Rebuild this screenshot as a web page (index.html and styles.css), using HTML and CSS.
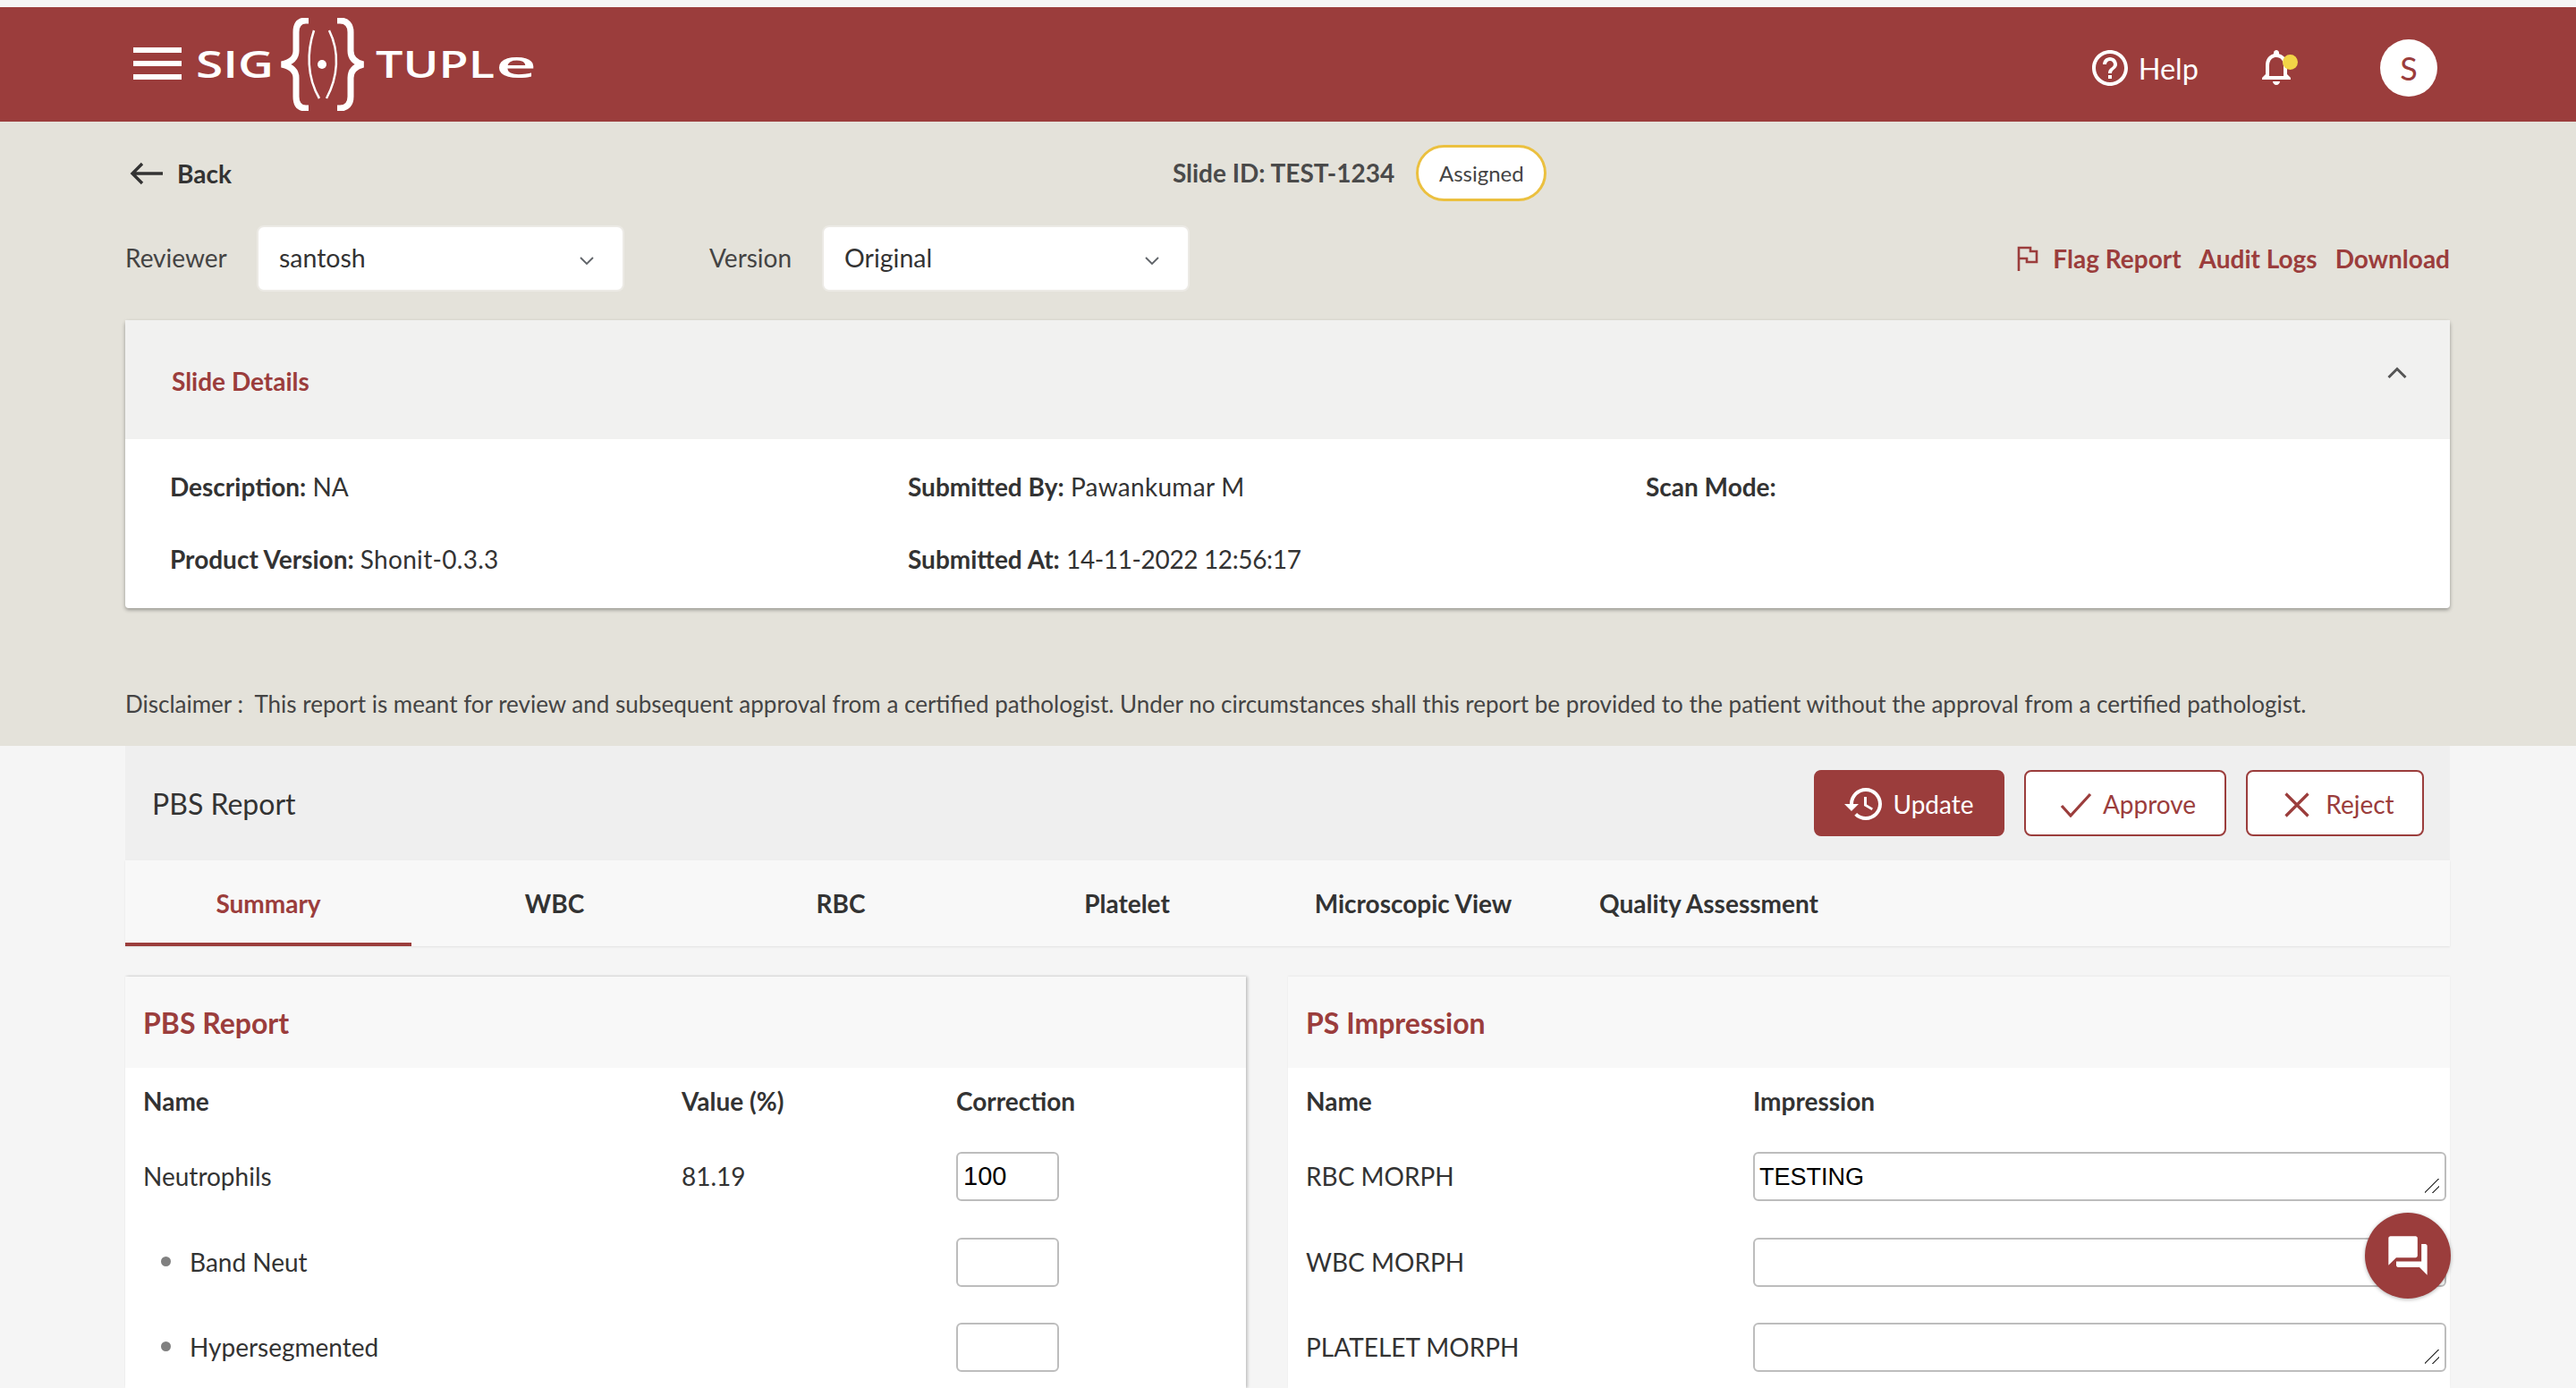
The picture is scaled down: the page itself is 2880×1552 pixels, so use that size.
FILE: index.html
```html
<!DOCTYPE html>
<html lang="en">
<head>
<meta charset="utf-8">
<title>PBS Report</title>
<link rel="stylesheet" href="styles.css">
</head>
<body>
<div class="strip"></div>
<header class="topbar">
  <div class="burger"><span></span><span></span><span></span></div>
  <svg class="logo" width="377" height="104" viewBox="0 0 377 104">
    <text class="logo-text" x="-1" y="67" textLength="87" lengthAdjust="spacingAndGlyphs">SIG</text>
    <g class="logo-lines">
      <path d="M125 3h-3c-8 0-11 5-11 13v21c0 9-7 13-16 15 9 2 16 6 16 15v21c0 8 3 13 11 13h3"/>
      <path d="M157 3h3c8 0 12 5 12 13v21c0 9 6 13 14 15-8 2-14 6-14 15v21c0 8-4 13-12 13h-3"/>
      <path class="thin" d="M131 14c-8 24-8 52 6 76"/>
      <path class="thin" d="M148 14c12 24 10 52-3 76"/>
    </g>
    <circle cx="140" cy="52" r="5" fill="#fff"/>
    <text class="logo-text" x="200" y="67" textLength="133" lengthAdjust="spacingAndGlyphs">TUPL</text>
    <text class="logo-text" x="334" y="67" textLength="46" lengthAdjust="spacingAndGlyphs" font-size="55">e</text>
  </svg>
  <div class="top-right">
    <div class="help">
      <svg width="40" height="40" viewBox="2 2 20 20"><path fill="#fff" d="M11 18h2v-2h-2v2zm1-16C6.48 2 2 6.48 2 12s4.48 10 10 10 10-4.48 10-10S17.52 2 12 2zm0 18c-4.41 0-8-3.59-8-8s3.59-8 8-8 8 3.59 8 8-3.59 8-8 8zm0-14c-2.21 0-4 1.79-4 4h2c0-1.1.9-2 2-2s2 .9 2 2c0 2-3 1.75-3 5h2c0-2.25 3-2.5 3-5 0-2.21-1.79-4-4-4z"/></svg>
      <span>Help</span>
    </div>
    <div class="bell">
      <svg width="32" height="44" viewBox="4 2 16 22"><path fill="#fff" d="M12 22c1.1 0 2-.9 2-2h-4c0 1.1.9 2 2 2zm6-6v-5c0-3.07-1.63-5.64-4.5-6.32V4c0-.83-.67-1.5-1.5-1.5s-1.5.67-1.5 1.5v.68C7.64 5.36 6 7.92 6 11v5l-2 2v1h16v-1l-2-2zm-2 1H8v-6c0-2.48 1.51-4.5 4-4.5s4 2.02 4 4.5v6z"/></svg>
      <i class="dot"></i>
    </div>
    <div class="avatar">S</div>
  </div>
</header>

<section class="beige">
  <div class="row-back">
    <div class="back">
      <svg width="38" height="26" viewBox="0 0 38 26"><path d="M37 13H3M14 2 3 13l11 11" fill="none" stroke="#333" stroke-width="3.4"/></svg>
      <span>Back</span>
    </div>
    <div class="slide-id">
      <span>Slide ID: TEST-1234</span>
      <span class="pill">Assigned</span>
    </div>
  </div>
  <div class="row-filters">
    <span class="f-label">Reviewer</span>
    <div class="select"><span>santosh</span><svg width="16" height="10" viewBox="0 0 16 10"><path d="M1 1l7 7 7-7" fill="none" stroke="#5f6368" stroke-width="1.8"/></svg></div>
    <span class="f-label second">Version</span>
    <div class="select"><span>Original</span><svg width="16" height="10" viewBox="0 0 16 10"><path d="M1 1l7 7 7-7" fill="none" stroke="#5f6368" stroke-width="1.8"/></svg></div>
    <div class="links">
      <svg width="24" height="28" viewBox="0 0 24 28"><path d="M2 28V2h13v4h7v12H11v-4H2" fill="none" stroke="#9b3d3c" stroke-width="2.6"/></svg>
      <a class="flag">Flag Report</a>
      <a>Audit Logs</a>
      <a>Download</a>
    </div>
  </div>
  <div class="details">
    <div class="details-head">
      <span>Slide Details</span>
      <svg width="22" height="14" viewBox="0 0 22 14"><path d="M1.500 12 11 2.500 20.500 12" fill="none" stroke="#555" stroke-width="3"/></svg>
    </div>
    <div class="details-body">
      <p><b>Description:</b> NA</p>
      <p><b>Submitted By:</b> <span class="loose">Pawankumar M</span></p>
      <p><b>Scan Mode:</b></p>
      <p><b>Product Version:</b> <span class="loose">Shonit-0.3.3</span></p>
      <p><b>Submitted At:</b> <span class="tight">14-11-2022 12:56:17</span></p>
    </div>
  </div>
  <p class="disclaimer">Disclaimer :&nbsp; This report is meant for review and subsequent approval from a certified pathologist. Under no circumstances shall this report be provided to the patient without the approval from a certified pathologist.</p>
</section>

<main class="report">
  <div class="report-bar">
    <h1>PBS Report</h1>
    <div class="actions">
      <button class="btn solid">
        <svg width="42" height="36" viewBox="1 3 21 18"><path fill="#fff" d="M13 3c-4.970 0-9 4.030-9 9H1l3.890 3.890.07.14L9 12H6c0-3.870 3.130-7 7-7s7 3.130 7 7-3.130 7-7 7c-1.930 0-3.680-.79-4.940-2.060l-1.420 1.420C8.270 19.990 10.510 21 13 21c4.970 0 9-4.030 9-9s-4.030-9-9-9zm-1 5v5l4.280 2.540.72-1.210-3.500-2.080V8H12z"/></svg>
        Update
      </button>
      <button class="btn approve">
        <svg width="36" height="28" viewBox="0 0 36 28"><path d="M2 15l10 11L34 2" fill="none" stroke="#9b3d3c" stroke-width="3.200"/></svg>
        Approve
      </button>
      <button class="btn reject">
        <svg width="28" height="28" viewBox="0 0 28 28"><path d="M1.500 1.500l25 25M26.500 1.500l-25 25" fill="none" stroke="#9b3d3c" stroke-width="3.200"/></svg>
        Reject
      </button>
    </div>
  </div>
  <nav class="tabs">
    <a class="tab active">Summary</a>
    <a class="tab">WBC</a>
    <a class="tab">RBC</a>
    <a class="tab">Platelet</a>
    <a class="tab">Microscopic View</a>
    <a class="tab">Quality Assessment</a>
  </nav>
  <div class="panels">
    <section class="panel left">
      <h2>PBS Report</h2>
      <div class="grid grid-left">
        <b>Name</b><b>Value (%)</b><b>Correction</b>
        <span>Neutrophils</span><span>81.19</span><input class="field small" value="100">
        <span class="sub">Band Neut</span><span></span><input class="field small">
        <span class="sub">Hypersegmented</span><span></span><input class="field small">
      </div>
    </section>
    <section class="panel right">
      <h2>PS Impression</h2>
      <div class="grid grid-right">
        <b>Name</b><b>Impression</b>
        <span>RBC MORPH</span><div class="ta-wrap"><textarea class="field wide">TESTING</textarea></div>
        <span>WBC MORPH</span><div class="ta-wrap"><textarea class="field wide"></textarea></div>
        <span>PLATELET MORPH</span><div class="ta-wrap"><textarea class="field wide"></textarea></div>
      </div>
    </section>
  </div>
</main>

<div class="fab">
  <svg width="52" height="52" viewBox="0 0 24 24"><path fill="#fff" d="M21 6h-2v9H6v2c0 .55.45 1 1 1h11l4 4V7c0-.55-.45-1-1-1zm-4 6V3c0-.55-.45-1-1-1H3c-.55 0-1 .45-1 1v14l4-4h10c.55 0 1-.45 1-1z"/></svg>
</div>
</body>
</html>
```
FILE: styles.css
```css
* { box-sizing: border-box; }
html, body { margin: 0; height: 1552px; overflow: hidden; }
body { background: #f5f5f5; font-family: Lato, "Liberation Sans", sans-serif; font-size: 28px; color: #333; position: relative; }
.strip { height: 8px; }

.topbar { height: 128px; background: #9b3d3c; display: flex; align-items: center; padding: 0 155px 0 149px; color: #fff; }
.burger { width: 54px; height: 36px; display: flex; flex-direction: column; justify-content: space-between; margin-right: 17px; margin-top: -2px; }
.burger span { height: 6px; background: #fff; display: block; }
.logo-text { fill: #fff; font-family: "Open Sans", sans-serif; font-weight: 600; font-size: 41px; }
.logo-lines path { fill: none; stroke: #fff; stroke-width: 7; }
.logo-lines path.thin { stroke-width: 2.500; }
.top-right { margin-left: auto; display: flex; align-items: center; margin-top: 8px; }
.help { display: flex; align-items: center; gap: 12px; font-size: 32.500px; }
.bell { position: relative; margin-left: 71px; height: 44px; width: 32px; margin-top: 2px; }
.bell .dot { position: absolute; width: 17px; height: 17px; border-radius: 50%; background: #f2d447; right: -8px; top: 6px; }
.bell svg { display: block; }
.avatar { margin-left: 100px; width: 64px; height: 64px; border-radius: 50%; background: #fff; color: #9b3d3c; font-size: 36px; display: flex; align-items: center; justify-content: center; }

.beige { height: 698px; background: #e4e2da; padding: 0 141px 0 140px; }
.row-back { height: 116px; display: flex; align-items: center; }
.back { display: flex; align-items: center; gap: 15px; font-weight: 700; font-size: 28px; padding-left: 5px; color: #333; }
.slide-id { margin-left: 1052px; display: flex; align-items: center; gap: 24px; font-weight: 700; font-size: 28px; color: #4a4a4a; margin-top: -2px; }
.pill { width: 146px; height: 63px; display: flex; align-items: center; justify-content: center; background: #fff; border: 3px solid #ebc03f; border-radius: 32px; font-weight: 400; font-size: 24px; color: #444; }
.row-filters { display: flex; align-items: center; height: 74px; }
.f-label { color: #444; font-size: 28px; width: 147px; margin-top: -2px; }
.f-label.second { width: 126px; margin-left: 95px; }
.select { width: 411px; height: 74px; background: #fff; border: 2px solid #eceae5; border-radius: 8px; display: flex; align-items: center; justify-content: space-between; padding: 0 32px 0 23px; font-size: 28.500px; color: #333; }
.select span { margin-top: -2px; }
.select svg { margin-top: 6px; }
.links { margin-left: auto; display: flex; align-items: center; color: #9b3d3c; font-weight: 700; font-size: 28px; gap: 20px; margin-top: -1px; }
.links .flag { margin-left: -4px; }

.details { margin-top: 32px; background: #fff; box-shadow: 0 2px 4px rgba(0,0,0,.35); border-radius: 4px; height: 322px; }
.details-head { height: 133px; background: #f1f1f0; display: flex; justify-content: space-between; align-items: center; padding: 2px 48px 0 52px; color: #9b3d3c; font-weight: 700; font-size: 28px; }
.details-head svg { margin-top: -18px; }
.details-body { display: grid; grid-template-columns: 825px 825px 1fr; grid-auto-rows: 81px; padding: 13px 50px 0; font-size: 28px; }
.details-body p { margin: 0; line-height: 81px; }
.loose { letter-spacing: .3px; }
.tight { letter-spacing: -.36px; }
.disclaimer { margin: 0; padding-top: 85px; font-size: 26px; line-height: 44px; color: #444; }

.report { padding: 0 141px 0 140px; }
.report-bar { height: 128px; background: #efefef; display: flex; justify-content: space-between; align-items: center; padding: 0 29px 0 30px; }
.report-bar h1 { margin: 0; font-weight: 400; font-size: 32px; color: #333; }
.actions { display: flex; gap: 22px; }
.btn { height: 74px; display: flex; align-items: center; justify-content: center; gap: 12px; border-radius: 8px; border: 2px solid #9b3d3c; background: #fff; color: #9b3d3c; font: 400 28px Lato, sans-serif; padding: 2px 0 0; }
.btn svg { margin-top: 2px; }
.btn.solid { width: 213px; background: #9b3d3c; color: #fff; }
.btn.solid svg { margin-top: 0; }
.btn.approve { width: 226px; padding-left: 6px; }
.btn.reject { width: 199px; gap: 18px; padding-left: 10px; }

.tabs { height: 96px; background: #f8f8f8; display: flex; box-shadow: 0 1px 2px rgba(0,0,0,.08); }
.tab { min-width: 320px; padding: 0 48px; display: flex; align-items: center; justify-content: center; font-weight: 700; font-size: 28px; color: #333; }
.tab.active { color: #9b3d3c; border-bottom: 4px solid #9b3d3c; padding-top: 4px; }

.panels { margin-top: 34px; display: flex; gap: 47px; }
.panel { background: #fff; height: 460px; }
.panel.left { width: 1253px; box-shadow: 2px 0 3px rgba(0,0,0,.2), 0 -1px 2px rgba(0,0,0,.05); }
.panel.right { flex: 1; box-shadow: 0 -1px 2px rgba(0,0,0,.05); }
.panel h2 { margin: 0; height: 102px; background: #f8f8f8; padding-left: 20px; display: flex; align-items: center; color: #9b3d3c; font-size: 32px; font-weight: 700; }
.grid { display: grid; grid-auto-rows: 95.500px; align-items: center; padding-left: 20px; font-size: 28px; color: #333; height: 358px; overflow: hidden; }
.grid-left { grid-template-columns: 602px 307px 1fr; grid-template-rows: 74px; }
.grid-right { grid-template-columns: 500px 1fr; grid-template-rows: 74px; }
.grid span { margin-top: -1px; }
.sub { position: relative; padding-left: 52px; }
.sub::before { content: ""; position: absolute; left: 20px; top: 50%; width: 11px; height: 11px; margin-top: -6px; border-radius: 50%; background: #808080; }
.field { display: block; height: 55px; border: 2px solid #bdbdbd; border-radius: 6px; background: #fff; font: 29px "Liberation Sans", sans-serif; color: #000; padding: 6px; margin: 0; }
.field.small { width: 115px; }
.ta-wrap { position: relative; width: 775px; height: 55px; }
.ta-wrap::after { content: ""; position: absolute; right: 8px; bottom: 9px; width: 16px; height: 16px; background: linear-gradient(135deg, transparent 0 46%, #555 46% 53%, transparent 53% 73%, #555 73% 80%, transparent 80%); pointer-events: none; }
.field.wide { width: 775px; line-height: 40px; padding: 6px 5px 0; font-size: 27px; resize: none; overflow: hidden; }

.fab { position: absolute; left: 2644px; top: 1356px; width: 96px; height: 96px; border-radius: 50%; background: #9b3d3c; box-shadow: 0 1px 4px rgba(0,0,0,.3); display: flex; align-items: center; justify-content: center; }
.fab svg { display: block; }
```
